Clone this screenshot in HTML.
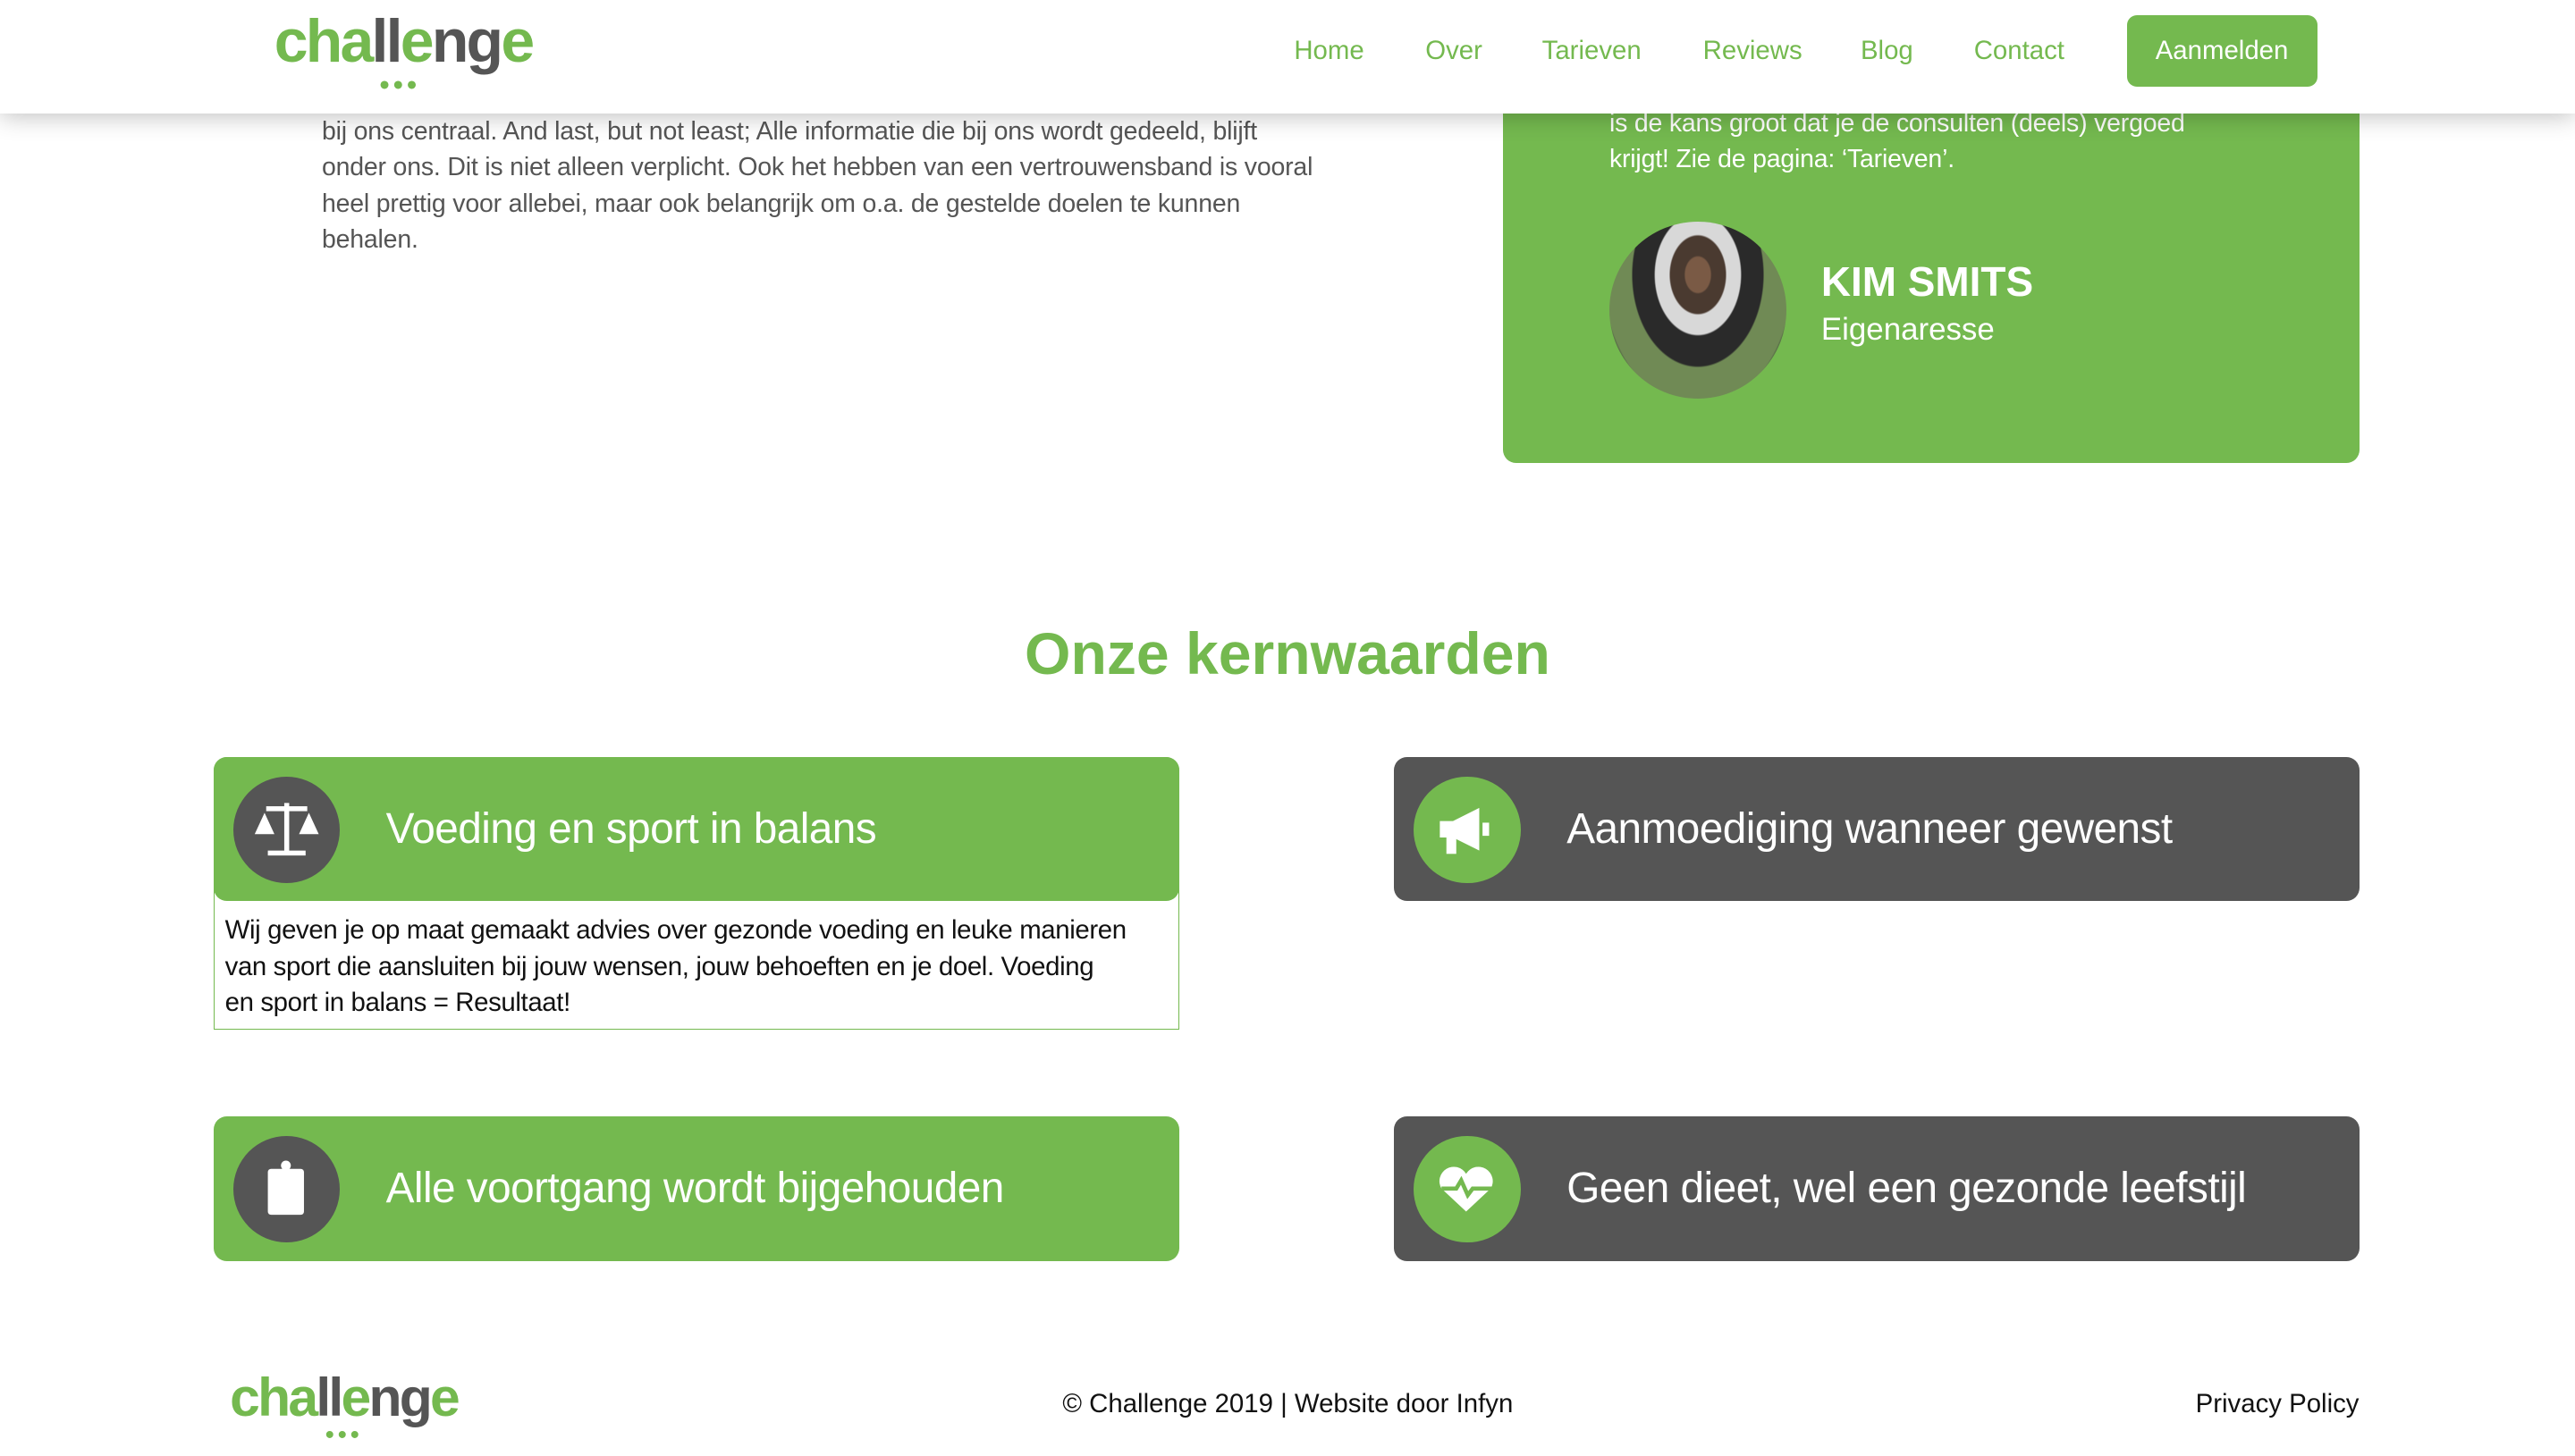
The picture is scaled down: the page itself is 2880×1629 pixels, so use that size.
<!DOCTYPE html>
<html><head><meta charset="utf-8"><style>
html,body{margin:0;padding:0;background:#fff;overflow:hidden}
body{width:2880px;height:1629px}
#w{width:1568px;height:887px;zoom:1.8367;position:relative;font-family:"Liberation Sans",sans-serif;overflow:hidden}
.hdr{position:absolute;left:0;top:0;width:1568px;height:69px;background:#fff;box-shadow:0 2px 14px rgba(0,0,0,.25);z-index:5}
.logo{position:absolute;font-weight:bold;letter-spacing:-1.5px}
.logo .g{color:#74b94f}.logo .d{color:#555}
.nav{position:absolute;top:22px;font-size:16px;color:#74b94f}
.btn{position:absolute;left:1295px;top:9px;width:116px;height:44px;background:#74b94f;border-radius:6px;color:#fff;font-size:16px;text-align:center;line-height:44px}
.p{position:absolute;left:196px;top:69px;width:700px;font-size:15.5px;line-height:22px;color:#555;letter-spacing:-.1px;white-space:nowrap}
.gb{position:absolute;left:915px;top:40px;width:522px;height:242px;background:#74b94f;border-radius:0 0 8px 8px}
h2{position:absolute;left:0;width:1568px;top:378px;margin:0;text-align:center;color:#74b94f;font-size:36px;font-weight:bold}
.card{position:absolute;width:588px;height:88px;border-radius:8px;color:#fff;font-size:26px;letter-spacing:-.3px}
.card .ic{position:absolute;left:12px;top:12px;width:65px;height:65px;border-radius:50%}
.card span{position:absolute;left:105px;top:29px}
.gr{background:#74b94f}.dk{background:#555}
.gr .ic{background:#555}.dk .ic{background:#74b94f}
</style></head><body><div id="w">
<div class="hdr">
<div class="logo" style="left:167px;top:4px;font-size:37px"><span class="g">cha</span><span class="d">ll</span><span class="g">e</span><span class="d">ng</span><span class="g">e</span></div>
<div style="position:absolute;left:231px;top:42px;color:#74b94f;font-size:18px;letter-spacing:2px">•••</div>
<div class="nav" style="left:788px">Home</div>
<div class="nav" style="left:868px">Over</div>
<div class="nav" style="left:939px">Tarieven</div>
<div class="nav" style="left:1037px">Reviews</div>
<div class="nav" style="left:1133px">Blog</div>
<div class="nav" style="left:1202px">Contact</div>
<div class="btn">Aanmelden</div>
</div>
<div class="p">bij ons centraal. And last, but not least; Alle informatie die bij ons wordt gedeeld, blijft<br>onder ons. Dit is niet alleen verplicht. Ook het hebben van een vertrouwensband is vooral<br>heel prettig voor allebei, maar ook belangrijk om o.a. de gestelde doelen te kunnen<br>behalen.</div>
<div class="gb">
<div style="position:absolute;left:65px;top:24px;color:#fff;font-size:15.5px;line-height:22px;letter-spacing:-.1px">is de kans groot dat je de consulten (deels) vergoed<br>krijgt! Zie de pagina: ‘Tarieven’.</div>
<div style="position:absolute;left:65px;top:95px;width:108px;height:108px;border-radius:50%;background:radial-gradient(ellipse at 50% 30%,#7a5a45 0 10%,#4a3a30 11% 22%,#d8d8d8 23% 34%,#2a2a2a 35% 52%,#708a55 53% 75%,#5a7048 76%)"></div>
<div style="position:absolute;left:194px;top:117px;color:#fff;font-size:25px;font-weight:bold">KIM SMITS</div>
<div style="position:absolute;left:194px;top:150px;color:#fff;font-size:19px">Eigenaresse</div>
</div>
<h2>Onze kernwaarden</h2>
<div style="position:absolute;left:130px;top:461px;width:587px;height:165px;border:1px solid #74b94f;border-radius:8px 8px 0 0"></div>
<div class="card gr" style="left:130px;top:461px"><div class="ic"><svg width="65" height="65" viewBox="0 0 65 65" fill="#fff"><rect x="20" y="18" width="25" height="3"/><rect x="31" y="16" width="3" height="30"/><rect x="21" y="45" width="23" height="3"/><path d="M19 22l-6 13h12zM46 22l-6 13h12z"/></svg></div><span>Voeding en sport in balans</span></div>
<div style="position:absolute;left:137px;top:556px;width:580px;font-size:16px;line-height:22px;color:#111;letter-spacing:-.2px;white-space:nowrap">Wij geven je op maat gemaakt advies over gezonde voeding en leuke manieren<br>van sport die aansluiten bij jouw wensen, jouw behoeften en je doel. Voeding<br>en sport in balans = Resultaat!</div>
<div class="card dk" style="left:849px;top:461px"><div class="ic"><svg width="65" height="65" viewBox="0 0 65 65" fill="#fff"><path d="M16 27h8l16-8v26l-16-8h-8z"/><rect x="20" y="37" width="6" height="10"/><rect x="42" y="28" width="4" height="8"/></svg></div><span>Aanmoediging wanneer gewenst</span></div>
<div class="card gr" style="left:130px;top:680px"><div class="ic"><svg width="65" height="65" viewBox="0 0 65 65" fill="#fff"><rect x="21" y="20" width="22" height="28" rx="2"/><circle cx="32" cy="18" r="3"/></svg></div><span>Alle voortgang wordt bijgehouden</span></div>
<div class="card dk" style="left:849px;top:680px"><div class="ic"><svg width="65" height="65" viewBox="0 0 65 65"><path d="M32 46L17 32a8 8 0 0 1 15-9a8 8 0 0 1 15 9z" fill="#fff"/><path d="M17 32h9l3-5 4 9 3-4h12" stroke="#74b94f" stroke-width="2.5" fill="none"/></svg></div><span>Geen dieet, wel een gezonde leefstijl</span></div>
<div class="logo" style="left:140px;top:832px;font-size:33px"><span class="g">cha</span><span class="d">ll</span><span class="g">e</span><span class="d">ng</span><span class="g">e</span></div>
<div style="position:absolute;left:198px;top:865px;color:#74b94f;font-size:16px;letter-spacing:2px">•••</div>
<div style="position:absolute;left:647px;top:846px;font-size:16px;color:#111">© Challenge 2019 | Website door Infyn</div>
<div style="position:absolute;left:1337px;top:846px;font-size:16px;color:#111">Privacy Policy</div>
</div></body></html>
